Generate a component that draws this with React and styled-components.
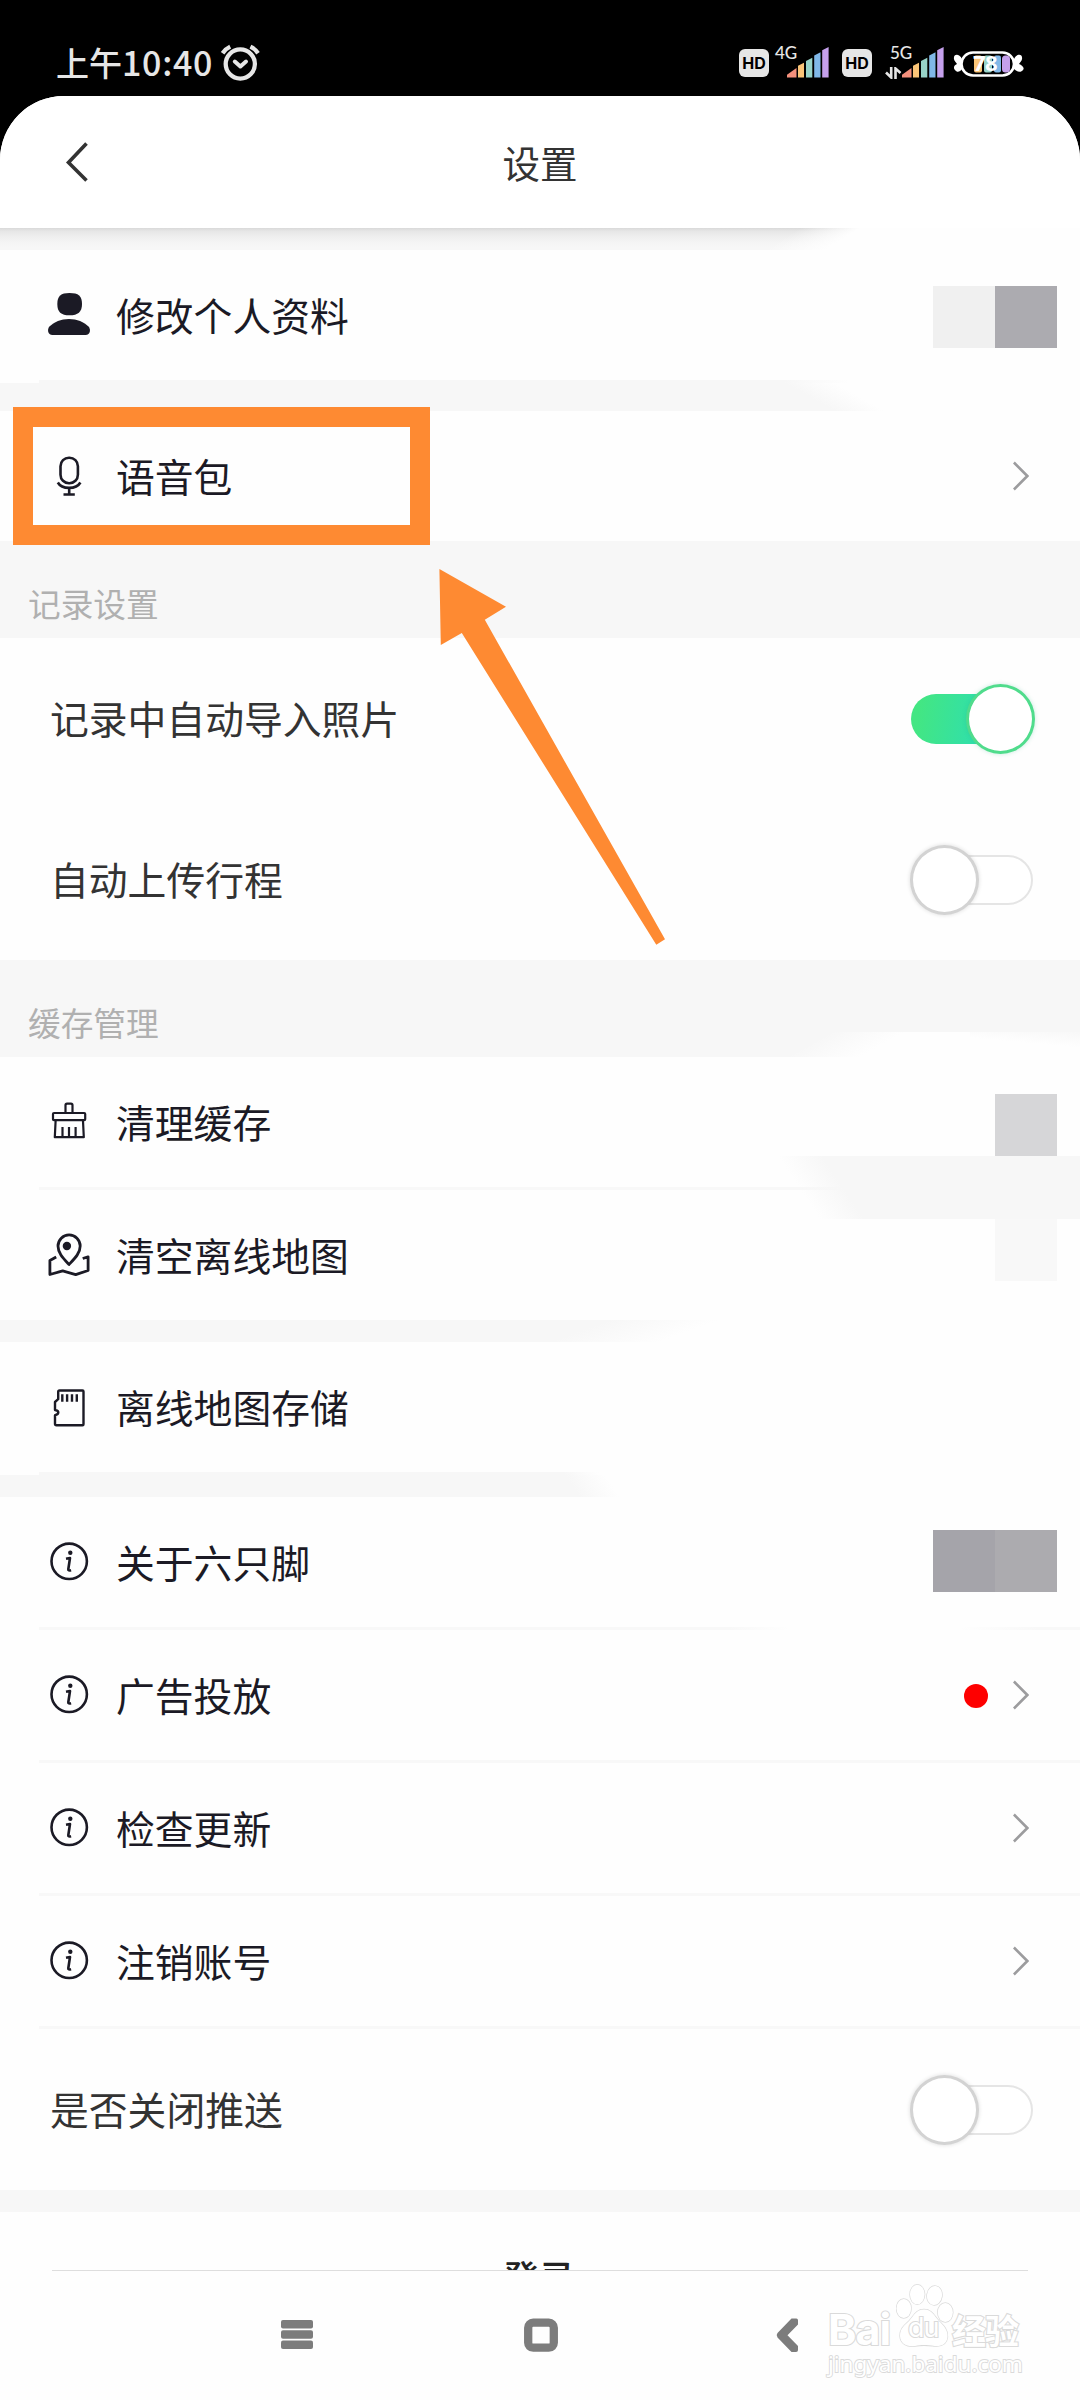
import React from "react";
import styled, { createGlobalStyle, css } from "styled-components";

const GlobalStyle = createGlobalStyle`
  *, *::before, *::after { box-sizing: border-box; }
  body {
    margin: 0;
    background: #000;
    font-family: "Noto Sans CJK SC", "Noto Sans", sans-serif;
  }
`;

const paper = "#fefefe";
const mist = "#f7f7f7";
const ink = "#1b1a25";

/* Gradient whose edge leans by `slant` px between the top and the bottom of a w x h box. */
const leaning = ({ w = 1080, h, start, end, slant, from = mist, to = paper }) => {
  const norm = Math.hypot(h, slant);
  const sin = h / norm;
  const cos = slant / norm;
  const length = w * sin + h * Math.abs(cos);
  const at = (x) => (x - w / 2) * sin + (h / 2) * cos + length / 2;
  const angle = (Math.atan2(h, slant) * 180) / Math.PI;
  return `linear-gradient(${angle.toFixed(2)}deg, ${from} ${at(start).toFixed(1)}px, ${to} ${at(end).toFixed(1)}px)`;
};

const Screen = styled.div`
  position: relative;
  width: 1080px;
  height: 2400px;
  overflow: hidden;
  display: flex;
  flex-direction: column;
  background: #000;
`;

const StatusBar = styled.div`
  height: 96px;
  flex: none;
  display: flex;
  justify-content: space-between;
  padding: 44px 56px 0 56px;
  color: #e6e6e6;
`;

const StatusSide = styled.div`
  display: flex;
  align-items: flex-start;
`;

const Clock = styled.span`
  font-size: 33px;
  line-height: 36px;
  font-weight: 500;
  width: 164px;
  white-space: nowrap;
`;

const Digits = styled.span`
  font-size: 34px;
  letter-spacing: 0.7px;
`;

const HdBadge = styled.span`
  width: 30px;
  height: 28px;
  margin-top: 5px;
  border-radius: 6px;
  background: #e6e6e6;
  color: #000;
  display: flex;
  align-items: center;
  justify-content: center;
  font: 700 16px/28px Inter, sans-serif;
`;

const Signal = styled.span`
  display: flex;
  margin-left: ${(p) => p.$gap}px;
  margin-right: ${(p) => p.$after}px;
  position: relative;
  width: ${(p) => p.$width}px;
  height: 36px;
  align-items: flex-end;
  justify-content: flex-end;
`;

const Network = styled.span`
  position: absolute;
  left: ${(p) => p.$x}px;
  top: 0;
  font: 500 17px/18px Lato, sans-serif;
`;

const Battery = styled.span`
  position: relative;
  display: flex;
  width: 72px;
  height: 28px;
  margin-top: 6px;
`;

const Charge = styled.span`
  position: absolute;
  left: 21px;
  top: 0;
  color: #fff;
  font: 700 22px/25px "Noto Sans", sans-serif;
  letter-spacing: -0.6px;
`;

const Panel = styled.main`
  flex: 1;
  min-height: 0;
  display: flex;
  flex-direction: column;
  background: ${paper};
  border-radius: 64px 64px 0 0;
  overflow: hidden;
`;

const Header = styled.header`
  height: 132px;
  flex: none;
  display: grid;
  grid-template-columns: 120px 1fr 120px;
  align-items: center;
  background: #fff;
`;

const BackButton = styled.span`
  display: flex;
  padding: 0 0 1px 63px;
`;

const Title = styled.h1`
  margin: 0 0 1px;
  text-align: center;
  font-size: 37.5px;
  font-weight: 400;
  line-height: 50px;
  color: #333;
`;

const List = styled.div`
  height: 2042px;
  flex: none;
  overflow: hidden;
  display: flex;
  flex-direction: column;
`;

const Gap = styled.div`
  flex: none;
  height: ${(p) => p.$h}px;
  background: ${(p) => (p.$fade ? leaning({ h: p.$h, ...p.$fade }) : mist)};
`;

const HeaderShade = styled(Gap)`
  background: ${leaning({
    h: 22, start: 800, end: 860, slant: -35, from: "rgba(254,254,254,0)", to: paper,
  })}, linear-gradient(#d9d9d9, #e6e6e6 3px, #eeeeee 8px, #f4f4f4 14px, #f7f7f7 20px);
`;

const Row = styled.div`
  flex: none;
  height: 130px;
  padding: 0 23px 0 47px;
  display: flex;
  align-items: center;
`;

const SwitchRow = styled(Row)`
  height: 161px;
  padding: 0 47px 0 50px;
`;

const Divider = styled.div`
  flex: none;
  height: 3px;
  margin-left: 39px;
  background: ${(p) => p.$fill || "#f8f8f8"};
`;

const Label = styled.span`
  flex: 1;
  font-size: 38.8px;
  line-height: 56px;
  margin-bottom: 3px;
  color: ${(p) => (p.$plain ? "#333" : ink)};
  white-space: nowrap;
`;

const IconBox = styled.span`
  width: 44px;
  height: 44px;
  display: flex;
  margin-right: 25px;
`;

const Section = styled.div`
  flex: none;
  height: 97px;
  padding: 37px 0 0 28px;
  font-size: 32.7px;
  line-height: 49px;
  color: #b0b0b0;
  background: ${mist};
  ${(p) =>
    p.$washed &&
    css`
      background: linear-gradient(5deg, rgba(247,247,247,0) 55%, ${mist} 105%) right bottom / 110px 25px no-repeat,
      ${leaning({
        w: 290, h: 25, start: 40, end: 115, slant: -45,
        from: "rgba(254,254,254,0)", to: paper,
      })} right bottom / 290px 25px no-repeat, ${mist};
    `}
`;

const Tiles = styled.span`
  align-self: flex-start;
  display: flex;
  margin-top: ${(p) => p.$top}px;
`;

const Tile = styled.span`
  width: 62px;
  height: 62px;
  background: ${(p) => p.$color};
`;

const RowEnd = styled.span`
  display: flex;
  align-items: center;
  gap: 25px;
  margin-right: 28px;
`;

const RedDot = styled.span`
  width: 24px;
  height: 24px;
  margin-top: 1px;
  border-radius: 50%;
  background: #fe0000;
`;

const Toggle = styled.span`
  width: 124px;
  height: 70px;
  display: flex;
  align-items: center;
  position: relative;
`;

const Track = styled.span`
  width: 122px;
  height: 50px;
  margin-left: 2px;
  border-radius: 25px;
  border: ${(p) => (p.$on ? "0" : "2.6px solid #e5e5e5")};
  background: ${(p) => (p.$on ? "linear-gradient(100deg, #43e683 8%, #2fdfae 60%)" : "#fff")};
`;

const Knob = styled.span`
  position: absolute;
  top: 0;
  left: ${(p) => (p.$on ? 57 : 1)}px;
  width: 69px;
  height: 70px;
  border-radius: 50%;
  background: #fff;
  border: 3px solid ${(p) => (p.$on ? "#50dc8c" : "#d3d3d3")};
  box-shadow: 0 0 4px ${(p) => (p.$on ? "rgba(40, 170, 130, 0.25)" : "rgba(0, 0, 0, 0.14)")};
`;

const RowGroup = styled.div`
  position: relative;
  flex: none;
`;

const Wash = styled.span`
  position: absolute;
  right: 0;
  top: 99px;
  width: 310px;
  height: 63px;
  background: ${leaning({
    w: 310, h: 63, start: 8, end: 52, slant: 42, from: "rgba(247,247,247,0)", to: mist,
  })};
`;

const Login = styled.div`
  flex: none;
  height: 128px;
  display: flex;
  align-items: center;
  justify-content: center;
  font-size: 36px;
  font-weight: 500;
  line-height: 50px;
  color: #222;
  padding-right: 2px;
`;

const NavBar = styled.nav`
  flex: 1;
  display: flex;
  justify-content: center;
  align-items: flex-start;
  padding: 48px 0 0 3px;
  position: relative;

  &::before {
    content: "";
    position: absolute;
    top: 0;
    left: 52px;
    right: 52px;
    height: 1px;
    background: #dedede;
  }
`;

const NavIcon = styled.svg`
  width: 34px;
  height: 34px;
  margin-right: ${(p) => p.$after || 0}px;
`;

const Highlight = styled.div`
  position: absolute;
  left: 13px;
  top: 407px;
  width: 417px;
  height: 138px;
  border: 20.5px solid #fe8a32;
`;

const Arrow = styled.svg`
  position: absolute;
  left: 439px;
  top: 568px;
`;

const Watermark = styled.div`
  position: absolute;
  left: 828px;
  top: 2282px;
  width: 196px;
  color: #fff;
  paint-order: stroke fill;
  -webkit-text-stroke: 2.2px #dadada;
`;

const Brand = styled.div`
  display: flex;
  align-items: flex-end;
  height: 66px;
`;

const BrandLatin = styled.span`
  width: 68px;
  font: 700 43px/44px Inter, sans-serif;
  letter-spacing: -1px;
  margin-bottom: -3px;
`;

const BrandHan = styled.span`
  font-size: 34px;
  font-weight: 700;
  line-height: 36px;
  letter-spacing: -1px;
  white-space: nowrap;
`;

const Paw = styled.span`
  position: relative;
  width: 58px;
  height: 66px;
  margin-right: -2px;
`;

const PawText = styled.span`
  position: absolute;
  left: 12px;
  top: 31px;
  font: 400 27px/30px Inter, sans-serif;
  letter-spacing: -1px;
`;

const Address = styled.div`
  font: 400 22.5px/26px "Noto Sans", sans-serif;
  margin-top: 3px;
  -webkit-text-stroke-width: 1.8px;
  white-space: nowrap;
`;

const SignalBars = () => (
  <svg width="42" height="31" viewBox="0 0 42 31" style={{ marginBottom: 2 }}>
    <path d="M0 30.5v-2.8L9.5 21v9.5z" fill="#f4907c" />
    <path d="M11 30.5V18.7l6-3v14.8z" fill="#fbc578" />
    <path d="M19 30.5V14l6.300-3.200v19.700z" fill="#97d3c8" />
    <path d="M27.200 30.500V8.500l6.300-3.200v25.200z" fill="#80b8e8" />
    <path d="M35.200 30.500V3.200L41.600 0v30.500z" fill="#c5a0ec" />
  </svg>
);

const AlarmIcon = () => (
  <svg width="40" height="38" viewBox="0 0 40 38" fill="none" stroke="#e6e6e6" strokeLinecap="round" strokeLinejoin="round">
    <circle cx="20.300" cy="20" r="14.600" strokeWidth="4.300" />
    <path d="M14.800 17.500l5.600 5 5.600-5" strokeWidth="4" />
    <path d="M2.600 9.200q3-4.500 7.600-6.600M38 9.200q-3-4.500-7.600-6.600" strokeWidth="4.300" strokeLinecap="butt" />
  </svg>
);

const Line = ({ children, w = 2.6 }) => (
  <svg width="44" height="44" viewBox="0 0 44 44" fill="none" stroke={ink} strokeWidth={w} strokeLinejoin="round">
    {children}
  </svg>
);

const PersonIcon = () => (
  <svg width="44" height="44" viewBox="0 0 44 44" fill={ink}>
    <path d="M22.500 0C31.500 0 35 3 35 11s-4 11.300-12.500 11.300S10.300 19 10.300 11 14 0 22.500 0z" />
    <path d="M22 26c8 0 15 3 19.500 7.500C44 36 43.500 42 38.500 42h-33C.5 42 0 36 2.500 33.500 7 29 14 26 22 26z" />
  </svg>
);

const MicIcon = () => (
  <Line>
    <rect x="13.500" y="3.700" width="17.400" height="25.500" rx="8.500" />
    <path d="M10.800 28.500c2 3.500 6.500 5.400 11.300 5.400s9.300-1.900 11.300-5.400M22.200 34v6M16.500 40.500h11.300" />
  </Line>
);

const BrushIcon = () => (
  <Line w={2.200}>
    <path d="M18.500 13V5.200q0-1.500 1.500-1.500h4q1.500 0 1.500 1.500V13M8.600 21L7.800 37.200h29L36 21M15.500 27v10M22 27v10M28.600 27v10" />
    <rect x="6" y="13" width="32.200" height="7.200" rx="1" />
  </Line>
);

const MapIcon = () => (
  <Line w={2.800}>
    <path d="M22 31.500C16 25 11 20 11 13a11.100 11.100 0 0 1 22.200 0c0 7-5 12-11.200 18.500z" />
    <path d="M9.200 24l-6.300 3.500v14l12.800-3.600 13 3.800 12.400-4.200V23.800l-5.400 1.700" />
    <circle cx="19.900" cy="13" r="4.200" fill={ink} stroke="none" />
  </Line>
);

const CardIcon = () => (
  <Line w={2.400}>
    <path d="M12.500 5.500h23q1 0 1 1v32.700q0 1-1 1H9.500q-1.500 0-1.500-1.500v-8.500q3.300-.8 3.300-2.700t-3.300-2.500v-8l3.200-2.800V6.800q0-1.300 1.300-1.300zM15.300 9.300v7.500M20.100 9.300v7.500M25 9.300v7.500M29.800 9.300v7.500" />
  </Line>
);

const InfoIcon = () => (
  <Line>
    <circle cx="22.200" cy="21.300" r="17.700" />
    <circle cx="23.300" cy="12.800" r="2.200" fill={ink} stroke="none" />
    <path d="M19 18.800l4-.8-1.700 11.300q-.2 1.700 2.800.9" />
  </Line>
);

const Chevron = () => (
  <svg width="16" height="30" viewBox="0 0 16 30" fill="none" stroke="#9c9c9e" strokeWidth="2.600">
    <path d="M.9 1.500L14.300 15 .9 28.500" />
  </svg>
);

const Item = ({ icon: Icon, label, children }) => (
  <Row>
    <IconBox><Icon /></IconBox>
    <Label>{label}</Label>
    {children}
  </Row>
);

const SwitchItem = ({ label, on }) => (
  <SwitchRow>
    <Label $plain>{label}</Label>
    <Toggle>
      <Track $on={on} />
      <Knob $on={on} />
    </Toggle>
  </SwitchRow>
);

export default function App() {
  return (
    <Screen>
      <GlobalStyle />
      <StatusBar>
        <StatusSide>
          <Clock>上午<Digits>10:40</Digits></Clock>
          <AlarmIcon />
        </StatusSide>
        <StatusSide>
          <HdBadge>HD</HdBadge>
          <Signal $gap={6} $width={54} $after={13}>
            <Network $x={0}>4G</Network>
            <SignalBars />
          </Signal>
          <HdBadge>HD</HdBadge>
          <Signal $gap={12} $width={60} $after={8}>
            <Network $x={6}>5G</Network>
            <svg width="17" height="12" viewBox="0 0 17 12" fill="none" stroke="#e6e6e6" strokeWidth="2.600" style={{ marginBottom: 1 }}>
              <path d="M6.200 0v10.500L1 5.500M10.500 12V1.500l5 4.500" />
            </svg>
            <SignalBars />
          </Signal>
          <Battery>
            <svg width="72" height="28" viewBox="0 0 72 28">
              <path d="M10 9C7 3 1 4 2 9c0 2 2 3 3 5-3 1-4 4-2 6 2 3 5 2 7-1zM62 9c3-6 9-5 8 0 0 2-2 3-3 5 3 1 6 4 4 6-2 3-6 2-9-1z" fill="#fff" />
              <rect x="9.500" y="2.500" width="52.500" height="23" rx="11.500" fill="#000" stroke="#fff" strokeWidth="2.600" />
              <rect x="22" y="5.500" width="8" height="17" rx="2" fill="#fbc578" />
              <rect x="32" y="5.500" width="8" height="17" rx="2" fill="#97d3c8" />
              <rect x="42" y="5.500" width="7" height="17" rx="2" fill="#80b8e8" />
              <rect x="50" y="5.500" width="8" height="17" rx="3.500" fill="#c5a0ec" />
            </svg>
            <Charge>78</Charge>
          </Battery>
        </StatusSide>
      </StatusBar>

      <Panel>
        <Header>
          <BackButton>
            <svg width="26" height="40" viewBox="0 0 26 40" fill="none" stroke="#333" strokeWidth="3.600">
              <path d="M23.500 1.500L5.500 20.500l18 18" />
            </svg>
          </BackButton>
          <Title>设置</Title>
        </Header>

        <List>
          <HeaderShade $h={22} />
          <Item icon={PersonIcon} label="修改个人资料">
            <Tiles $top={36}>
              <Tile $color="#f0f0f0" />
              <Tile $color="#acabb0" />
            </Tiles>
          </Item>
          <Divider $fill={`linear-gradient(90deg, ${mist} 745px, ${paper} 810px)`} />
          <Gap $h={28} $fade={{ start: 785, end: 835, slant: 50 }} />
          <Item icon={MicIcon} label="语音包">
            <RowEnd><Chevron /></RowEnd>
          </Item>

          <Section>记录设置</Section>
          <SwitchItem label="记录中自动导入照片" on />
          <SwitchItem label="自动上传行程" />

          <Section $washed>缓存管理</Section>
          <RowGroup>
            <Item icon={BrushIcon} label="清理缓存">
              <Tiles $top={37}><Tile $color="#d6d6d8" /></Tiles>
            </Item>
            <Divider />
            <Item icon={MapIcon} label="清空离线地图">
              <Tiles $top={29}><Tile $color="#f8f8f8" /></Tiles>
            </Item>
            <Wash />
          </RowGroup>
          <Gap $h={22} $fade={{ start: 610, end: 720, slant: -60 }} />
          <Item icon={CardIcon} label="离线地图存储" />
          <Divider $fill={`linear-gradient(90deg, ${mist} 525px, ${paper} 560px)`} />
          <Gap $h={22} $fade={{ start: 565, end: 605, slant: 15 }} />

          <Item icon={InfoIcon} label="关于六只脚">
            <Tiles $top={33}>
              <Tile $color="#a5a4aa" />
              <Tile $color="#acabaf" />
            </Tiles>
          </Item>
          <Divider $fill={`linear-gradient(90deg, #f8f8f8 690px, ${paper} 750px, ${paper} 920px, #f8f8f8 1000px)`} />
          <Item icon={InfoIcon} label="广告投放">
            <RowEnd><RedDot /><Chevron /></RowEnd>
          </Item>
          <Divider />
          <Item icon={InfoIcon} label="检查更新">
            <RowEnd><Chevron /></RowEnd>
          </Item>
          <Divider />
          <Item icon={InfoIcon} label="注销账号">
            <RowEnd><Chevron /></RowEnd>
          </Item>
          <Divider />
          <SwitchItem label="是否关闭推送" />
          <Gap $h={22} />
          <Login>登录</Login>
        </List>

        <NavBar>
          <NavIcon $after={210} viewBox="0 0 34 34" fill="#7c7c7c">
            <rect x="1" y="2" width="32" height="8.500" rx="2" />
            <rect x="1" y="12.200" width="32" height="8.500" rx="2" />
            <rect x="1" y="22.500" width="32" height="8.500" rx="2" />
          </NavIcon>
          <NavIcon $after={211} viewBox="0 0 34 34" fill="none" stroke="#7c7c7c" strokeWidth="8.300">
            <rect x="4.200" y="4.700" width="25.600" height="25" rx="5" />
          </NavIcon>
          <NavIcon viewBox="0 0 34 34" fill="#7c7c7c">
            <path d="M22.500.5h4.800q1.700 0 1.700 1.700v4.300L18.500 17.300 29 28v4q0 2-2 2h-4.500L8.500 19.500q-1.800-2.200 0-4.400z" />
          </NavIcon>
        </NavBar>
      </Panel>

      <Highlight />
      <Arrow width="228" height="378" viewBox="0 0 228 378" fill="#fe8a32">
        <path d="M.4 1L67 38.700 45.800 51.700 226 371.300l-8.700 5.500L22.800 65 1.800 77z" />
      </Arrow>
      <Watermark>
        <Brand>
          <BrandLatin>Bai</BrandLatin>
          <Paw>
            <svg width="58" height="66" viewBox="0 0 58 66" fill="#fff" stroke="#dadada" strokeWidth="1.400">
              <ellipse cx="7.800" cy="26.500" rx="7.300" ry="9.500" />
              <ellipse cx="21.300" cy="12.500" rx="7.300" ry="9.800" />
              <ellipse cx="38.500" cy="13.500" rx="7.500" ry="9.500" transform="rotate(8 38.500 13.500)" />
              <ellipse cx="49.300" cy="30.500" rx="7.500" ry="9.500" />
              <path d="M28 27.500c8 0 10 6 14.500 11C48 44 52 48 51.500 55c-.8 7-6 9.500-12.500 9-8-.8-12-1.500-20 0C11 65.200 4.500 62 4 54c0-8 5-11 9.500-15.500 4.500-5 6.500-11 14.500-11z" />
            </svg>
            <PawText>du</PawText>
          </Paw>
          <BrandHan>经验</BrandHan>
        </Brand>
        <Address>jingyan.baidu.com</Address>
      </Watermark>
    </Screen>
  );
}
